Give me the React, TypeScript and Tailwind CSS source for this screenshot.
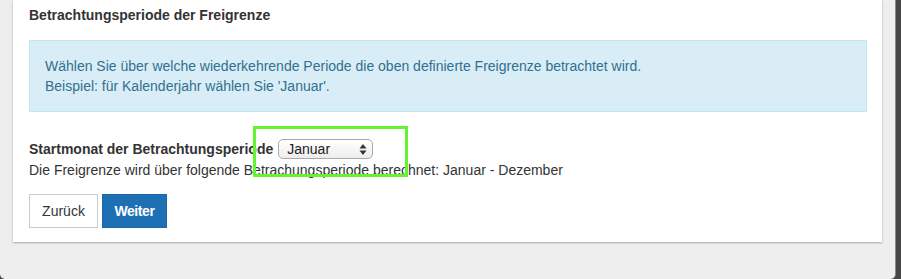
export default function App() {
  return (
    <div className="h-[279px] w-[901px] bg-[#454545] font-['Liberation_Sans',Arial,sans-serif] text-[14px] leading-[20px] text-[#333]">
      <div className="relative h-[279px] w-[896px] overflow-hidden rounded-b-[5px] border-r border-[#8a8a8a] bg-[#eeeeee]">
        {/* panel */}
        <div className="ml-[13px] w-[869px] bg-white pl-[16px] pr-[15px] pt-[5px] pb-[14px] shadow-[0_1px_2px_rgba(0,0,0,0.3)]">
          <h3 className="mb-[15px] font-bold">Betrachtungsperiode der Freigrenze</h3>

          <div className="border border-[#bce8f1] bg-[#d9edf7] p-[15px] text-[#31708f]">
            <p>Wählen Sie über welche wiederkehrende Periode die oben definierte Freigrenze betrachtet wird.</p>
            <p>Beispiel: für Kalenderjahr wählen Sie 'Januar'.</p>
          </div>

          <div className="mt-[27px] flex items-center">
            <span className="font-bold">Startmonat der Betrachtungsperiode</span>
            <div className="ml-[5px] flex h-[20px] w-[95px] items-center justify-between rounded-[5px] border border-[#a9a9a9] bg-gradient-to-b from-white to-[#ededed] pl-[8px] pr-[5px]">
              <span className="text-[14px] leading-[18px] text-[#222]">Januar</span>
              <svg width="8" height="13" viewBox="0 0 8 13" className="text-[#333]">
                <path d="M4 1 L7.5 5.5 L0.5 5.5 Z" fill="currentColor" />
                <path d="M4 12 L7.5 7.5 L0.5 7.5 Z" fill="currentColor" />
              </svg>
            </div>
          </div>
          <p className="pt-[1px]">Die Freigrenze wird über folgende Betrachungsperiode berechnet: Januar - Dezember</p>

          <div className="mt-[14px] flex gap-[4px]">
            <button className="h-[34px] w-[69px] border border-[#ccc] bg-white text-[#333]">Zurück</button>
            <button className="h-[34px] w-[65px] border border-[#1b67a8] bg-[#1e70b5] font-bold tracking-[-0.4px] text-white">Weiter</button>
          </div>
        </div>

        {/* highlight annotation */}
        <div className="pointer-events-none absolute left-[253px] top-[126px] h-[51px] w-[155px] border-[3px] border-[#62f52e]" />
      </div>
    </div>
  );
}
